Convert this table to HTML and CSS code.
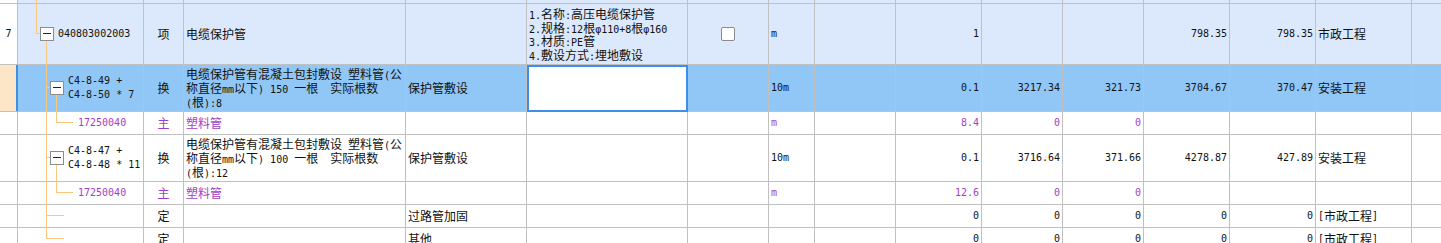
FILE: index.html
```html
<!DOCTYPE html>
<html lang="zh-CN">
<head>
<meta charset="utf-8">
<title>清单</title>
<link rel="stylesheet" href="styles.css">
</head>
<body>
<div class="sheet">
  <div class="row h0 item">
    <div class="no"></div>
    <div class="tree"><span class="seg v x18 full"></span></div>
    <div></div><div></div><div></div><div></div><div></div><div></div><div></div><div></div><div></div><div></div><div></div><div></div><div></div><div class="last"></div>
  </div>

  <div class="row h1 item">
    <div class="no c mono">7</div>
    <div class="tree pad22">
      <span class="seg v x18 stem1"></span>
      <span class="seg h join1"></span>
      <span class="seg v x28 below1"></span>
      <span class="tog"></span><span class="code">040803002003</span>
    </div>
    <div class="c">项</div>
    <div>电缆保护管</div>
    <div></div>
    <div class="lines">
      <div><span class="a">1.</span>名称<span class="a">:</span>高压电缆保护管</div>
      <div><span class="a">2.</span>规格<span class="a">:12</span>根<span class="a">φ110+8</span>根<span class="a">φ160</span></div>
      <div><span class="a">3.</span>材质<span class="a">:PE</span>管</div>
      <div><span class="a">4.</span>敷设方式<span class="a">:</span>埋地敷设</div>
    </div>
    <div class="c"><span class="chk"></span></div>
    <div class="mono">m</div>
    <div></div>
    <div class="n">1</div>
    <div class="n"></div>
    <div class="n"></div>
    <div class="n">798.35</div>
    <div class="n">798.35</div>
    <div>市政工程</div>
    <div class="last"></div>
  </div>

  <div class="row h2 sel">
    <div class="no cur"></div>
    <div class="tree pad32">
      <span class="seg v x28 full"></span>
      <span class="seg h join2"></span>
      <span class="seg v x38 below2"></span>
      <span class="tog"></span><span class="code">C4-8-49 +<br>C4-8-50 * 7</span>
    </div>
    <div class="c">换</div>
    <div class="lines">
      <div>电缆保护管有混凝土包封敷设<span class="a"> </span>塑料管<span class="a">(</span>公</div>
      <div>称直径<span class="a">mm</span>以下<span class="a">) 150 </span>一根<span class="a">  </span>实际根数</div>
      <div><span class="a">(</span>根<span class="a">):8</span></div>
    </div>
    <div>保护管敷设</div>
    <div class="edit"></div>
    <div></div>
    <div class="mono">10m</div>
    <div></div>
    <div class="n">0.1</div>
    <div class="n">3217.34</div>
    <div class="n">321.73</div>
    <div class="n">3704.67</div>
    <div class="n">370.47</div>
    <div>安装工程</div>
    <div class="last"></div>
  </div>

  <div class="row h3">
    <div class="no"></div>
    <div class="tree pad60">
      <span class="seg v x28 full"></span>
      <span class="seg v x38 upper"></span>
      <span class="seg h child"></span>
      <span class="code p nogap">17250040</span>
    </div>
    <div class="c p">主</div>
    <div class="p">塑料管</div>
    <div></div>
    <div></div>
    <div></div>
    <div class="mono p">m</div>
    <div></div>
    <div class="n p">8.4</div>
    <div class="n p">0</div>
    <div class="n p">0</div>
    <div class="n"></div>
    <div class="n"></div>
    <div></div>
    <div class="last"></div>
  </div>

  <div class="row h2">
    <div class="no"></div>
    <div class="tree pad32">
      <span class="seg v x28 full"></span>
      <span class="seg h join2"></span>
      <span class="seg v x38 below2"></span>
      <span class="tog"></span><span class="code">C4-8-47 +<br>C4-8-48 * 11</span>
    </div>
    <div class="c">换</div>
    <div class="lines">
      <div>电缆保护管有混凝土包封敷设<span class="a"> </span>塑料管<span class="a">(</span>公</div>
      <div>称直径<span class="a">mm</span>以下<span class="a">) 100 </span>一根<span class="a">  </span>实际根数</div>
      <div><span class="a">(</span>根<span class="a">):12</span></div>
    </div>
    <div>保护管敷设</div>
    <div></div>
    <div></div>
    <div class="mono">10m</div>
    <div></div>
    <div class="n">0.1</div>
    <div class="n">3716.64</div>
    <div class="n">371.66</div>
    <div class="n">4278.87</div>
    <div class="n">427.89</div>
    <div>安装工程</div>
    <div class="last"></div>
  </div>

  <div class="row h3">
    <div class="no"></div>
    <div class="tree pad60">
      <span class="seg v x28 full"></span>
      <span class="seg v x38 upper"></span>
      <span class="seg h child"></span>
      <span class="code p nogap">17250040</span>
    </div>
    <div class="c p">主</div>
    <div class="p">塑料管</div>
    <div></div>
    <div></div>
    <div></div>
    <div class="mono p">m</div>
    <div></div>
    <div class="n p">12.6</div>
    <div class="n p">0</div>
    <div class="n p">0</div>
    <div class="n"></div>
    <div class="n"></div>
    <div></div>
    <div class="last"></div>
  </div>

  <div class="row h3">
    <div class="no"></div>
    <div class="tree">
      <span class="seg v x28 full"></span>
      <span class="seg h sib"></span>
    </div>
    <div class="c">定</div>
    <div></div>
    <div>过路管加固</div>
    <div></div>
    <div></div>
    <div></div>
    <div></div>
    <div class="n">0</div>
    <div class="n">0</div>
    <div class="n">0</div>
    <div class="n">0</div>
    <div class="n">0</div>
    <div><span class="a">[</span>市政工程<span class="a">]</span></div>
    <div class="last"></div>
  </div>

  <div class="row h3">
    <div class="no"></div>
    <div class="tree">
      <span class="seg v x28 upper"></span>
      <span class="seg h sib"></span>
    </div>
    <div class="c">定</div>
    <div></div>
    <div>其他</div>
    <div></div>
    <div></div>
    <div></div>
    <div></div>
    <div class="n">0</div>
    <div class="n">0</div>
    <div class="n">0</div>
    <div class="n">0</div>
    <div class="n">0</div>
    <div><span class="a">[</span>市政工程<span class="a">]</span></div>
    <div class="last"></div>
  </div>
</div>
</body>
</html>
```

FILE: styles.css
```css
html, body {
  margin: 0;
  padding: 0;
  background: #fff;
  overflow: hidden;
}

body {
  font: 12px/14px "Noto Sans CJK SC", "Noto Sans CJK JP", sans-serif;
  color: #111;
}

.sheet {
  width: 1441px;
}

.row {
  display: grid;
  grid-template-columns: 18px 126px 40px 222px 121px 161px 81px 46px 81px 86px 81px 81px 86px 86px 96px 29px;
}

.row > div {
  box-sizing: border-box;
  border-right: 1px solid #c0c0c0;
  border-bottom: 1px solid #c0c0c0;
  display: flex;
  align-items: center;
  min-width: 0;
  overflow: hidden;
  padding-left: 2px;
  white-space: nowrap;
}

.row > div.last {
  border-right: none;
}

.h0 { height: 4px; }
.h1 { height: 61px; }
.h2 { height: 47px; }
.h3 { height: 23px; }

.item > div { background: #dce9fc; }
.sel > div { background: #91c7f6; }

.row > div.no { background: #fff; }
.row > div.cur {
  background: #fde6c8;
  border-right-color: #3d8fe8;
  box-shadow: inset -1px 0 0 #3d8fe8;
}

.c {
  justify-content: center;
  padding-left: 0 !important;
}

.mono,
.code,
.n,
.a {
  font-family: "DejaVu Sans Mono", "Liberation Mono", monospace;
  font-size: 10px;
}

.a {
  white-space: pre;
  line-height: 10px;
}

.n {
  justify-content: flex-end;
  padding-left: 0 !important;
  padding-right: 2px;
}

.p { color: #a23ec6; }

.lines {
  flex-direction: column;
  align-items: flex-start !important;
  justify-content: center;
}

.lines > div {
  height: 13.5px;
  line-height: 13.5px;
}

.h2 .lines > div {
  height: 14px;
  line-height: 14px;
}

/* tree column */
.row > div.tree {
  position: relative;
  overflow: visible;
  padding-left: 0;
}
.row > div.pad22 { padding-left: 22px; }
.row > div.pad32 { padding-left: 32px; }
.row > div.pad60 { padding-left: 60px; }

.seg {
  position: absolute;
  background: #f9c87e;
}
.v { width: 1px; }
.h { height: 1px; }
.x18 { left: 18px; }
.x28 { left: 28px; }
.x38 { left: 38px; }

.full { top: 0; bottom: -1px; }
.upper { top: 0; height: 11px; }
.stem1 { top: 0; height: 30px; }
.below1 { top: 37px; bottom: -1px; }
.below2 { top: 30px; bottom: -1px; }

.join1 { top: 29px; left: 18px; width: 4px; }
.join2 { top: 22px; left: 28px; width: 4px; }
.child { top: 10px; left: 38px; width: 17px; }
.sib { top: 10px; left: 28px; width: 18px; }

.tog {
  position: relative;
  flex: none;
  width: 14px;
  height: 14px;
  box-sizing: border-box;
  border: 1px solid #8c8c8c;
  background: #fff;
}
.tog::after {
  content: "";
  position: absolute;
  left: 2px;
  top: 5px;
  width: 8px;
  height: 1px;
  background: #222;
}

.code {
  margin-left: 4px;
  line-height: 14px;
  color: #111;
}
.code.p { color: #a23ec6; }
.code.nogap { margin-left: 0; }

.chk {
  width: 14px;
  height: 14px;
  box-sizing: border-box;
  border: 1px solid #8a8a8a;
  border-radius: 2px;
  background: #fff;
}

.row > div.edit {
  background: #fff;
  outline: 2px solid #3c8ee8;
  outline-offset: -2px;
}
```
